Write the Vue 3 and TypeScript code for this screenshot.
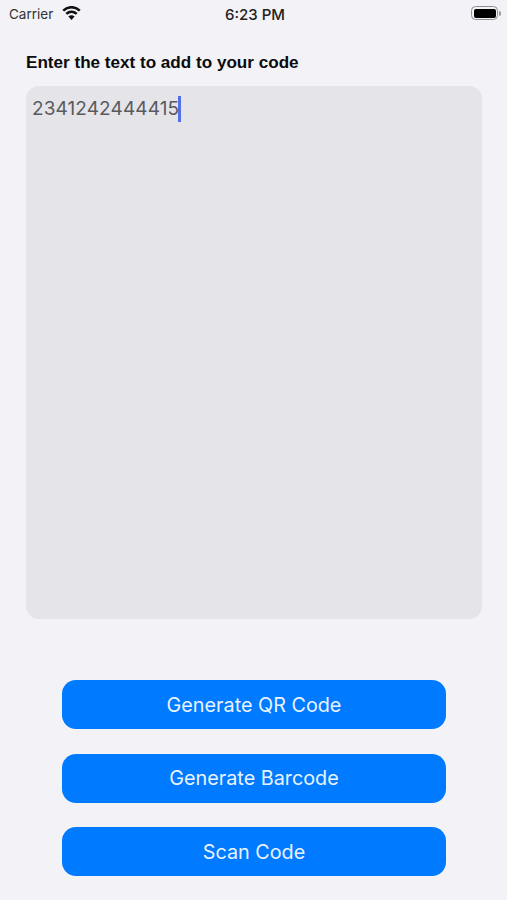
<script setup lang="ts">
const buttons: string[] = ['Generate QR Code', 'Generate Barcode', 'Scan Code']
</script>

<template>
  <div class="screen">
    <header class="status">
      <div class="left">
        <span class="carrier">Carrier</span>
        <svg class="wifi" width="19" height="14" viewBox="0 0 19 14">
          <path d="M1.200 4.600C6 .1 13 .1 17.800 4.600" fill="none" stroke="#111" stroke-width="2.600" />
          <path d="M4.300 7.900C7.400 5.100 11.600 5.100 14.700 7.900" fill="none" stroke="#111" stroke-width="2.600" />
          <path d="M6.400 10.500C8.300 8.900 10.700 8.900 12.600 10.500L9.500 14z" fill="#111" />
        </svg>
      </div>
      <span class="time">6:23 PM</span>
      <div class="battery">
        <div class="shell"><div class="charge"></div></div>
        <div class="nub"></div>
      </div>
    </header>

    <main class="content">
      <label class="title">Enter the text to add to your code</label>
      <div class="editor">
        <span class="value">2341242444415</span><span class="caret"></span>
      </div>
      <div class="actions">
        <button v-for="b in buttons" :key="b" class="action">{{ b }}</button>
      </div>
    </main>
  </div>
</template>

<style>
html, body { margin: 0; background: #f2f2f7; }
</style>

<style scoped>
.screen {
  width: 507px;
  height: 900px;
  overflow: hidden;
  box-sizing: border-box;
  background: #f2f2f7;
  font-family: Inter, "Liberation Sans", sans-serif;
  display: flex;
  flex-direction: column;
}
.status {
  height: 28px;
  padding: 0 6px 0 9px;
  display: grid;
  grid-template-columns: 1fr auto 1fr;
  align-items: center;
  color: #111;
}
.left { display: flex; align-items: center; gap: 9px; }
.carrier { font-size: 13.500px; color: #333; }
.wifi { margin-top: -2px; }
.time { font-size: 15px; font-weight: 500; color: #222; }
.battery { justify-self: end; display: flex; align-items: center; margin-top: -2px; }
.shell {
  width: 27px;
  height: 14px;
  box-sizing: border-box;
  border: 1.500px solid #8e8e90;
  border-radius: 4.500px;
  padding: 1.500px;
  flex-shrink: 0;
}
.charge { width: 100%; height: 100%; background: #000; border-radius: 2px; }
.nub { width: 2px; height: 5px; background: #999; border-radius: 0 2px 2px 0; margin-left: 1px; }
.content {
  flex: 1;
  padding: 24px 25px 0 26px;
  display: flex;
  flex-direction: column;
}
.title {
  font-size: 17.100px;
  font-weight: 700;
  line-height: 21px;
  color: #0b0b0d;
  font-family: "Liberation Sans", sans-serif;
}
.editor {
  margin-top: 13px;
  height: 533px;
  background: #e4e4e9;
  border-radius: 13px;
  padding: 10px 6px;
  box-sizing: border-box;
  display: flex;
  align-items: flex-start;
}
.value { font-size: 19px; line-height: 25px; color: #5a5a5e; letter-spacing: 0.100px; }
.caret { display: block; flex-shrink: 0; width: 2.500px; height: 26px; margin-left: -1px; background: #5470e8; }
.actions {
  margin-top: 61px;
  padding: 0 36px;
  display: flex;
  flex-direction: column;
  gap: 24.500px;
}
.action {
  height: 49px;
  border: none;
  border-radius: 14px;
  background: #007aff;
  color: #e9f3ff;
  font-family: Inter, "Liberation Sans", sans-serif;
  font-size: 19.800px;
  padding: 0;
}
</style>
